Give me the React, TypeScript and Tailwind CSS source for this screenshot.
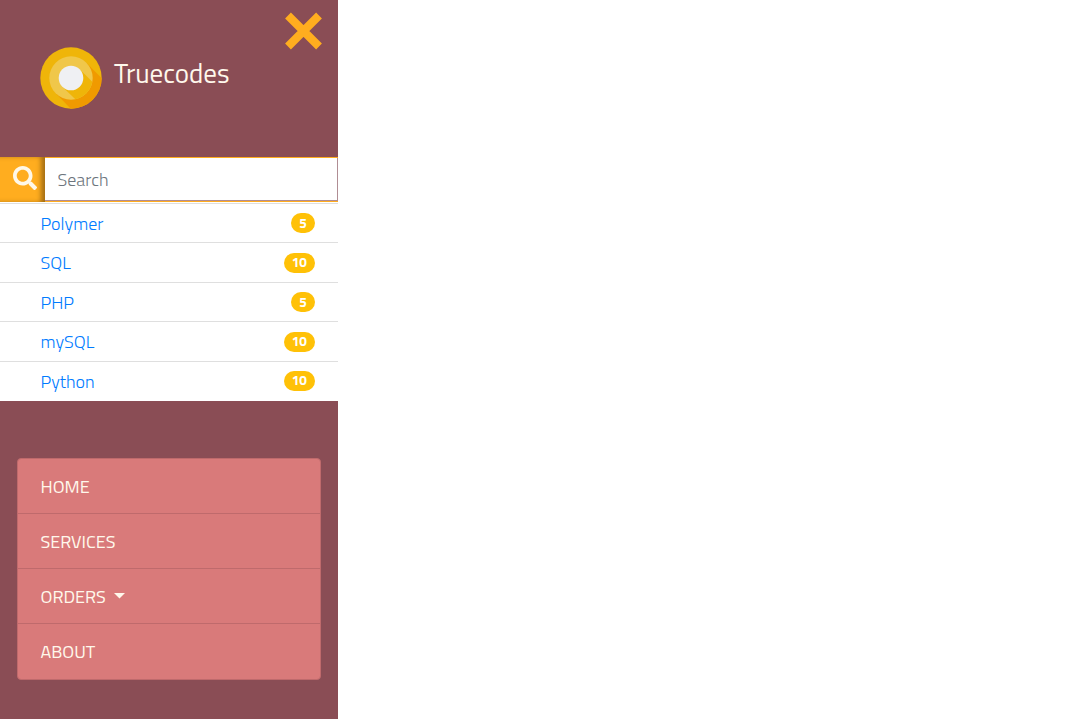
import React from "react";

const categories = [
  { name: "Polymer", count: 5, row: "h-[39px]" },
  { name: "SQL", count: 10, row: "h-[40px]" },
  { name: "PHP", count: 5, row: "h-[39px]" },
  { name: "mySQL", count: 10, row: "h-[40px]" },
  { name: "Python", count: 10, row: "h-[40px] [&>span]:mb-[2px]" },
];

const links = ["HOME", "SERVICES", "ORDERS", "ABOUT"];

function Logo() {
  return (
    <svg className="size-[62px] shrink-0" viewBox="0 0 62 62">
      <defs>
        <clipPath id="disc"><circle cx="31" cy="31" r="30.7" /></clipPath>
        <clipPath id="ring"><circle cx="31" cy="31" r="21.7" /></clipPath>
      </defs>
      <circle cx="31" cy="31" r="30.7" fill="#efb509" />
      <path clipPath="url(#disc)" d="M46.3 15.700L62 31.400V62H31L15.700 46.300Z" fill="#f09a00" />
      <circle cx="31" cy="31" r="21.7" fill="#f0c74a" />
      <path clipPath="url(#ring)" d="M39.700 22.300L56 38.600V56H39.300L22.300 39.700Z" fill="#efb509" />
      <circle cx="31" cy="31" r="12.3" fill="#eff0f3" />
    </svg>
  );
}

export default function App() {
  return (
    <div className="min-h-[719px] bg-white font-['Titillium_Web','Open_Sans',sans-serif]">
      <aside className="flex h-[719px] w-[338px] flex-col bg-[#8a4d55]">
        <header className="flex h-[157px] justify-between">
          <div className="flex gap-3 pt-[47px] pl-10">
            <Logo />
            <h1 className="mt-[8px] text-[27px] leading-9 font-normal text-[#fff8ec]">Truecodes</h1>
          </div>
          <button aria-label="Close" className="mt-3 mr-[15px] size-[38px]">
            <svg viewBox="0 0 38 38" className="size-full">
              <path d="M3 3.500L34 34.500M34 3.500L3 34.500" stroke="#ffad1f" strokeWidth="8.2" />
            </svg>
          </button>
        </header>
        <div className="flex h-[45px] shrink-0">
          <div className="flex w-[45px] justify-end bg-[#ffad1f] pt-[9px] pr-2 shadow-[inset_-5px_0_5px_-1px_#a66f14]">
            <svg className="size-6" viewBox="0 0 512 512" fill="#fff8e8">
              <path d="M505 442.700L405.300 343c-4.500-4.500-10.600-7-17-7H372c27.600-35.300 44-79.700 44-128C416 93.100 322.900 0 208 0S0 93.100 0 208s93.100 208 208 208c48.300 0 92.700-16.400 128-44v16.300c0 6.400 2.500 12.500 7 17l99.700 99.700c9.400 9.400 24.600 9.400 33.900 0l28.300-28.300c9.400-9.400 9.400-24.600.1-34zM208 336c-70.700 0-128-57.200-128-128 0-70.700 57.200-128 128-128 70.700 0 128 57.200 128 128 0 70.700-57.200 128-128 128z" />
            </svg>
          </div>
          <div className="flex-1 border-y border-[#ffad1f]">
            <input placeholder="Search" className="block h-full w-full border-r border-b border-[#b08d94] bg-white pt-px pl-[12.500px] text-[18px] font-light outline-none placeholder:text-[#6c757d]" />
          </div>
        </div>
        <ul className="bg-white pt-px">
          {categories.map((c) => (
            <li key={c.name} className={`flex items-center justify-between border-t border-[#dfdfdf] pr-[23px] pl-[40.500px] ${c.row}`}>
              <a className="text-[18px] leading-[27px] font-light text-[#007bff]">{c.name}</a>
              <span className="flex h-5 items-center rounded-full bg-[#ffc107] px-[8.100px] text-[13.500px] font-bold text-white">{c.count}</span>
            </li>
          ))}
        </ul>
        <nav className="mx-[17px] mt-[57px] h-[222px] overflow-hidden rounded border border-[#bf6a6c] bg-[#d97a7a]">
          {links.map((l) => (
            <a key={l} className="flex h-[55px] items-center border-b border-[#bf6a6c] pt-px pl-[22.500px] text-[18px] text-[#fff8ec] last:border-0 last:pt-0 last:pb-px">
              {l}
              {l === "ORDERS" && <svg className="mb-[2px] ml-2 h-[6px] w-[11px]" viewBox="0 0 11 6"><path d="M0 0H11L5.500 5.500Z" fill="#fff8ec" /></svg>}
            </a>
          ))}
        </nav>
      </aside>
    </div>
  );
}
